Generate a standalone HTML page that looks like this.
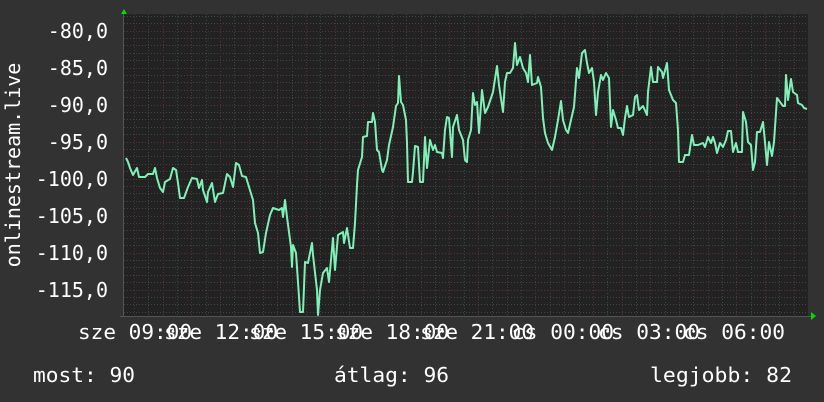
<!DOCTYPE html>
<html><head><meta charset="utf-8"><style>
html,body{margin:0;padding:0;background:#323232;}
svg{display:block}
text{font-family:"DejaVu Sans Mono","Liberation Mono",monospace;fill:#fff;font-size:20px}
</style></head><body>
<svg width="824" height="402" viewBox="0 0 824 402" xmlns="http://www.w3.org/2000/svg">
<rect width="824" height="402" fill="#323232"/>
<rect x="124" y="14" width="684" height="302" fill="#222222"/>
<g stroke="#444" stroke-width="1" stroke-dasharray="1,2" fill="none" shape-rendering="crispEdges">
<path d="M124 16.5H808M124 23.5H808M124 38.5H808M124 45.5H808M124 53.5H808M124 60.5H808M124 75.5H808M124 82.5H808M124 90.5H808M124 97.5H808M124 112.5H808M124 119.5H808M124 127.5H808M124 134.5H808M124 149.5H808M124 156.5H808M124 164.5H808M124 171.5H808M124 186.5H808M124 193.5H808M124 201.5H808M124 208.5H808M124 223.5H808M124 230.5H808M124 238.5H808M124 245.5H808M124 260.5H808M124 267.5H808M124 275.5H808M124 282.5H808M124 297.5H808M124 304.5H808M124 312.5H808"/>
<path d="M148.5 14V316M177.5 14V316M206.5 14V316M234.5 14V316M263.5 14V316M292.5 14V316M320.5 14V316M349.5 14V316M378.5 14V316M406.5 14V316M435.5 14V316M464.5 14V316M492.5 14V316M521.5 14V316M550.5 14V316M579.5 14V316M607.5 14V316M636.5 14V316M665.5 14V316M693.5 14V316M722.5 14V316M751.5 14V316M779.5 14V316"/>
</g>
<g stroke="#5a3434" stroke-width="1" stroke-dasharray="1,2" fill="none" shape-rendering="crispEdges">
<path d="M124 31.5H808M124 68.5H808M124 105.5H808M124 142.5H808M124 179.5H808M124 216.5H808M124 253.5H808M124 290.5H808"/>
<path d="M134.5 14V316M163.5 14V316M191.5 14V316M220.5 14V316M249.5 14V316M277.5 14V316M306.5 14V316M335.5 14V316M363.5 14V316M392.5 14V316M421.5 14V316M449.5 14V316M478.5 14V316M507.5 14V316M535.5 14V316M564.5 14V316M593.5 14V316M622.5 14V316M650.5 14V316M679.5 14V316M708.5 14V316M736.5 14V316M765.5 14V316M794.5 14V316"/>
</g>
<path d="M123.5 12V316M120 316.5H812" stroke="#555" stroke-width="1" shape-rendering="crispEdges"/>
<polygon points="121,14 124,9 127,14" fill="#00dd00"/>
<polygon points="811,312 816,316 811,320" fill="#00dd00"/>
<polyline fill="none" stroke="#7ff0b8" stroke-width="2" stroke-linejoin="round" points="126,158 128,162 130,168 133,175 137,168 139,177 145,177 148,174 153,174 155,168 157,178 160,188 163,192 165,182 170,179 173,168 176,170 178,183 180,198 184,198 188,187 192,178 197,179 199,188 202,180 203,190 207,202 208,192 212,183 215,202 218,194 223,193 227,174 230,177 233,187 236,163 239,165 242,176 246,177 249,187 253,200 255,223 258,233 260,253 263,252 266,233 270,215 273,208 279,210 282,208 283,217 285,200 287,217 291,247 292,267 293,245 296,253 298,282 300,312 303,312 305,262 308,263 312,243 313,255 317,290 318,315 320,290 323,273 327,268 329,282 333,238 335,270 338,235 343,232 344,243 347,228 350,248 353,248 355,223 357,185 358,170 362,157 363,137 367,136 368,122 372,122 373,113 375,122 377,150 379,152 382,170 383,172 387,160 389,145 393,127 396,106 398,103 399,76 401,102 403,105 406,120 407,143 408,182 412,182 413,172 415,146 418,147 420,182 423,182 425,137 427,168 430,140 433,150 435,145 437,152 442,153 443,158 445,130 447,117 449,118 452,157 453,127 457,115 459,130 463,140 465,160 467,162 468,140 471,130 473,93 475,105 477,102 479,133 482,90 485,113 488,107 493,92 497,66 499,85 503,112 505,82 507,73 510,73 513,68 515,43 517,65 520,57 523,68 526,73 528,82 530,55 532,85 537,83 538,77 541,87 543,118 545,133 548,143 552,150 555,137 558,120 561,101 563,120 566,130 568,133 571,120 574,107 577,68 579,78 582,53 585,50 587,63 589,73 592,68 594,82 596,115 598,92 601,75 603,80 606,73 609,78 611,127 613,110 616,120 618,128 621,128 623,135 625,118 627,106 629,117 633,115 635,97 637,95 639,110 643,106 647,115 648,92 651,67 653,82 657,82 658,67 662,72 663,78 667,63 669,90 673,100 676,103 678,130 679,162 683,162 685,155 689,155 692,135 694,145 698,145 703,143 705,147 708,137 711,143 713,137 715,143 717,153 720,143 723,147 726,140 728,131 731,131 733,152 736,143 738,152 742,152 743,112 746,122 748,142 751,145 753,170 755,162 757,132 760,132 763,122 765,142 767,165 769,142 772,156 774,142 777,98 780,102 783,106 785,106 786,75 788,100 791,79 793,92 797,95 798,103 802,105 804,108 807,109"/>
<g text-anchor="end">
<text x="108" y="38">-80,0</text>
<text x="108" y="75">-85,0</text>
<text x="108" y="112">-90,0</text>
<text x="108" y="149">-95,0</text>
<text x="108" y="186">-100,0</text>
<text x="108" y="223">-105,0</text>
<text x="108" y="260">-110,0</text>
<text x="108" y="297">-115,0</text>
</g>
<text transform="translate(20,165) rotate(-90)" text-anchor="middle">onlinestream.live</text>
<g>
<text x="78" y="339" textLength="114" lengthAdjust="spacingAndGlyphs">sze 09:00</text>
<text x="164" y="339" textLength="114" lengthAdjust="spacingAndGlyphs">sze 12:00</text>
<text x="249" y="339" textLength="114" lengthAdjust="spacingAndGlyphs">sze 15:00</text>
<text x="335" y="339" textLength="114" lengthAdjust="spacingAndGlyphs">sze 18:00</text>
<text x="420" y="339" textLength="114" lengthAdjust="spacingAndGlyphs">sze 21:00</text>
<text x="512" y="339" textLength="102" lengthAdjust="spacingAndGlyphs">cs 00:00</text>
<text x="598" y="339" textLength="102" lengthAdjust="spacingAndGlyphs">cs 03:00</text>
<text x="683" y="339" textLength="102" lengthAdjust="spacingAndGlyphs">cs 06:00</text>
</g>
<text x="33" y="382" textLength="102" lengthAdjust="spacingAndGlyphs">most: 90</text>
<text x="334" y="382" textLength="115" lengthAdjust="spacingAndGlyphs">átlag: 96</text>
<text x="650" y="382" textLength="142" lengthAdjust="spacingAndGlyphs">legjobb: 82</text>
</svg>
</body></html>
